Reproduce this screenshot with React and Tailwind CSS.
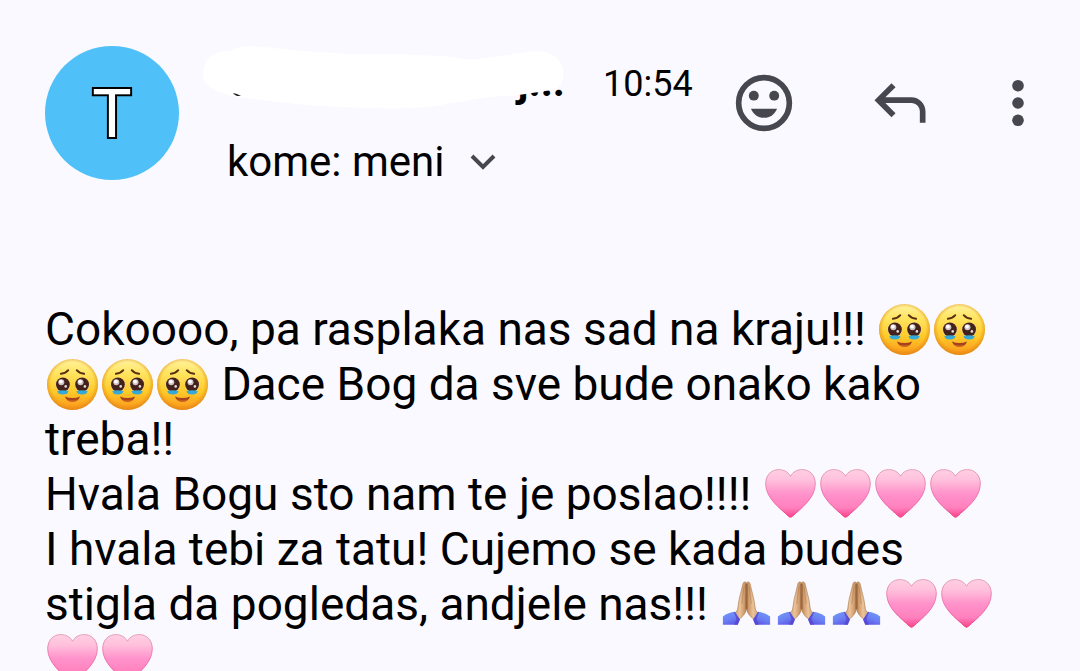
import React from "react";

function EmojiDefs() {
  return (
    <svg className="absolute h-0 w-0" aria-hidden="true">
      <defs>
        <linearGradient id="faceFill" x1="0" y1="0" x2="0" y2="1">
          <stop offset="0" stopColor="#fff3a0" />
          <stop offset="0.3" stopColor="#ffe35c" />
          <stop offset="0.65" stopColor="#ffc928" />
          <stop offset="1" stopColor="#fb941c" />
        </linearGradient>
        <radialGradient id="faceEdge" cx="0.5" cy="0.48" r="0.52">
          <stop offset="0.8" stopColor="#e88a10" stopOpacity="0" />
          <stop offset="1" stopColor="#d98316" stopOpacity="0.7" />
        </radialGradient>
        <linearGradient id="heartFill" x1="0" y1="0" x2="0" y2="1">
          <stop offset="0" stopColor="#ffd0e2" />
          <stop offset="0.22" stopColor="#ffc0dc" />
          <stop offset="0.5" stopColor="#ff93cb" />
          <stop offset="0.8" stopColor="#ff80bd" />
          <stop offset="1" stopColor="#f8428c" />
        </linearGradient>
        <linearGradient id="heartEdge" x1="0" y1="0" x2="0" y2="1">
          <stop offset="0" stopColor="#e5a0b8" />
          <stop offset="0.6" stopColor="#ee6cae" />
          <stop offset="1" stopColor="#ee3b80" />
        </linearGradient>
        <linearGradient id="skinFill" x1="0" y1="0" x2="1" y2="0">
          <stop offset="0" stopColor="#c9935f" />
          <stop offset="0.5" stopColor="#ecc49a" />
          <stop offset="1" stopColor="#bd8555" />
        </linearGradient>
        <linearGradient id="sleeveFill" x1="0" y1="0" x2="0.5" y2="1">
          <stop offset="0" stopColor="#6f9cf8" />
          <stop offset="0.6" stopColor="#6c80f4" />
          <stop offset="1" stopColor="#5f5ce6" />
        </linearGradient>
      </defs>
    </svg>
  );
}

function Emoji({ label, children }) {
  return (
    <svg
      viewBox="0 0 54 54"
      role="img"
      aria-label={label}
      className="inline h-[54px] w-[55px] align-[-11px]"
    >
      {children}
    </svg>
  );
}

function Eye({ x }) {
  return (
    <g transform={`translate(${x} 0)`}>
      <circle cx="0" cy="27.8" r="7.4" fill="#f3d489" />
      <circle cx="0" cy="27.5" r="6.9" fill="#43221c" />
      <path d="M-5.6 34q5.6 -1.6 11.2 0q-.6 3.6 -5.6 3.6t-5.6 -3.6z" fill="#35a9d8" />
      <circle cx="-1.6" cy="25.2" r="3" fill="#cfc2c2" />
      <circle cx="-2" cy="24.6" r="1.9" fill="#fff" />
      <circle cx="2.8" cy="29.4" r="1.3" fill="#e8dcdc" />
    </g>
  );
}

function TearyFace() {
  return (
    <Emoji label="face holding back tears">
      <circle cx="27" cy="27.5" r="25.5" fill="url(#faceFill)" />
      <circle cx="27" cy="27.5" r="25.5" fill="url(#faceEdge)" />
      <path
        d="M15.4 16.8q5 -.6 7.4 -3.6M31.2 13.2q2.4 3 7.4 3.6"
        fill="none"
        stroke="#5a3014"
        strokeWidth="1.9"
        strokeLinecap="round"
      />
      <Eye x={17.4} />
      <Eye x={36.6} />
      <path d="M19.4 39.4q7.6 3 15.2 0q-2 5.4 -7.6 5.4t-7.6 -5.4z" fill="#a3421c" />
      <path d="M22 42.4q5 2 10 0q-2 2.4 -5 2.4t-5 -2.4z" fill="#d66a2a" />
    </Emoji>
  );
}

function PinkHeart() {
  return (
    <Emoji label="pink heart">
      <path
        d="M27 9.2C29.2 4.8 34 2.6 38.8 2.6 46.4 2.6 51.8 8.4 51.8 16.8 51.8 31.6 36.6 41.8 29 49.2 27.6 50.5 26.4 50.5 25 49.2 17.4 41.8 2.2 31.6 2.2 16.8 2.2 8.4 7.6 2.6 15.2 2.6 20 2.6 24.8 4.8 27 9.2Z"
        fill="url(#heartFill)"
        stroke="url(#heartEdge)"
        strokeWidth="1"
      />
    </Emoji>
  );
}

function Hand() {
  return (
    <>
      <path
        d="M27 6C25.8 4.2 23.8 4.8 23.4 7L19.6 22.4 18 33 13.6 38.2 18.6 42.8C22.6 40.4 26 37 27 32Z"
        fill="url(#skinFill)"
        stroke="#a87347"
        strokeWidth="0.6"
      />
      <path d="M26.5 7V32" fill="none" stroke="#7d4a2a" strokeWidth="1" opacity="0.7" />
      <path d="M24.6 9L22.2 27" fill="none" stroke="#a06a40" strokeWidth="0.7" opacity="0.6" />
      <path
        d="M3.4 39.4Q9 35.4 15.4 34.8L20.4 42.4 18.2 47.8H3.4Z"
        fill="url(#sleeveFill)"
      />
      <path d="M14.4 34.9H15.4L20.4 42.4 18.2 47.8H14.6L17 42Z" fill="#5645d0" opacity="0.8" />
    </>
  );
}

function FoldedHands() {
  return (
    <Emoji label="folded hands">
      <Hand />
      <g transform="matrix(-1 0 0 1 54 0)">
        <Hand />
      </g>
    </Emoji>
  );
}

function SmileIcon() {
  return (
    <svg viewBox="0 0 24 24" className="h-[68px] w-[68px]" fill="currentColor">
      <circle cx="12" cy="12" r="8.95" fill="none" stroke="currentColor" strokeWidth="2" />
      <circle cx="8.4" cy="9.4" r="1.75" />
      <circle cx="15.6" cy="9.4" r="1.75" />
      <path d="M7.4 14h9.2c-.8 2-2.5 3.2-4.6 3.2S8.2 16 7.4 14z" />
    </svg>
  );
}

function ReplyIcon() {
  return (
    <svg viewBox="0 0 24 24" className="h-[68px] w-[68px]" fill="currentColor">
      <path d="M19 19v-4c0-1.66-1.34-3-3-3H6.83l3.6 3.6L9 17l-6-6 6-6 1.43 1.4L6.83 10H16c2.76 0 5 2.24 5 5v4z" />
    </svg>
  );
}

function MoreIcon() {
  return (
    <svg viewBox="0 0 24 24" className="h-[68px] w-[68px]" fill="currentColor">
      <circle cx="12" cy="5.9" r="2.05" />
      <circle cx="12" cy="12" r="2.05" />
      <circle cx="12" cy="18.1" r="2.05" />
    </svg>
  );
}

function Sender() {
  return (
    <div className="relative h-[56px] w-[338px] text-right text-[42px] leading-[56px] font-bold">
      j...
      {/* white marker stroke over the name */}
      <svg
        viewBox="0 0 364 66"
        className="absolute -top-[10px] -left-[25px] h-[66px] w-[364px]"
        aria-hidden="true"
      >
        <path
          d="M1 29C2 14 12 6 29 7C38 0 60 2 88 6L145 10C180 9 210 11 240 12C256 13 262 17 276 15L325 8C346 5 359 12 361 26C363 38 357 45 350 46L310 52C290 50 268 57 248 59C218 66 180 65 140 63C110 62 75 58 50 55C28 52 0 48 1 29Z"
          fill="#fff"
        />
        <path d="M31 49q4 .6 8 3q-6 .6-8-3z" fill="#222" />
      </svg>
    </div>
  );
}

export default function App() {
  return (
    <div className="min-h-screen bg-[#faf9ff] font-[Roboto,sans-serif] text-black">
      <EmojiDefs />
      <header className="flex items-start pt-[46px] pr-[28px] pl-[45px]">
        <div className="flex h-[134px] w-[134px] shrink-0 items-center justify-center rounded-full bg-[#4fc1f8] pt-1 text-[66px] leading-none text-white [-webkit-text-stroke:4px_black] [paint-order:stroke_fill]">
          T
        </div>

        <div className="ml-[48px] pt-2">
          <div className="flex items-baseline gap-[38px]">
            <Sender />
            <time className="text-[36px]">10:54</time>
          </div>
          <button type="button" className="mt-[23px] flex items-center gap-[26px] text-[42px] leading-[56px]">
            kome: meni
            <svg viewBox="0 0 26 16" className="h-[16px] w-[26px]" fill="none" stroke="#46474f" strokeWidth="4">
              <path d="M2 2l11 11L24 2" />
            </svg>
          </button>
        </div>

        <div className="mt-[23px] ml-auto flex text-[#46474f]">
          <button type="button" aria-label="Add reaction" className="mr-[68px]">
            <SmileIcon />
          </button>
          <button type="button" aria-label="Reply" className="mr-[50px]">
            <ReplyIcon />
          </button>
          <button type="button" aria-label="More options">
            <MoreIcon />
          </button>
        </div>
      </header>

      <main className="pt-[112px] pr-[60px] pl-[45px] text-[46px] leading-[55px]">
        <p>
          Cokoooo, pa rasplaka nas sad na kraju!!! <TearyFace />
          <TearyFace />
          <TearyFace />
          <TearyFace />
          <TearyFace /> Dace Bog da sve bude onako kako treba!!
        </p>
        <p>
          Hvala Bogu sto nam te je poslao!!!! <PinkHeart />
          <PinkHeart />
          <PinkHeart />
          <PinkHeart />
        </p>
        <p>
          I hvala tebi za tatu! Cujemo se kada budes stigla da pogledas, andjele
          nas!!! <FoldedHands />
          <FoldedHands />
          <FoldedHands />
          <PinkHeart />
          <PinkHeart />
          <PinkHeart />
          <PinkHeart />
        </p>
      </main>
    </div>
  );
}
